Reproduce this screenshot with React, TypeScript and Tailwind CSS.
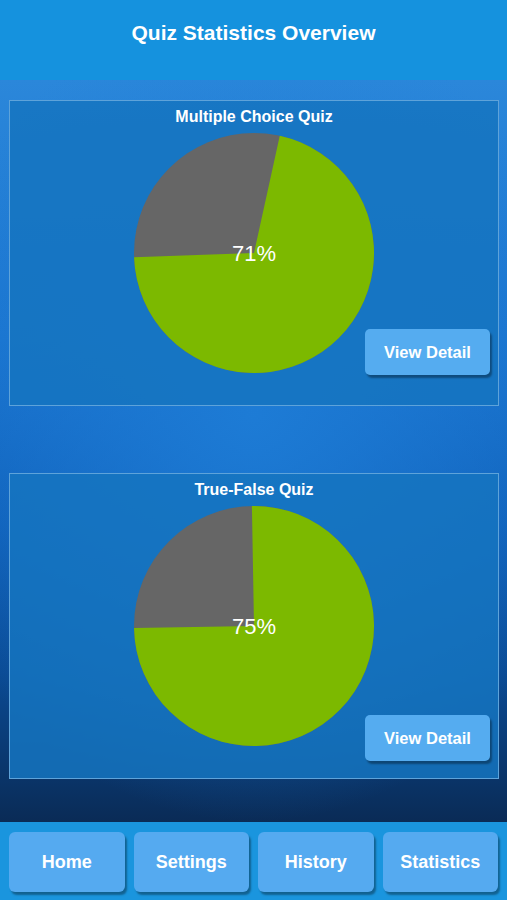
import React from "react";

const font = { fontFamily: '"Liberation Sans", Arial, sans-serif' };

function slicePath(cx: number, cy: number, r: number, a0: number, a1: number) {
  const pt = (a: number) => {
    const rad = ((a - 90) * Math.PI) / 180;
    return [cx + r * Math.cos(rad), cy + r * Math.sin(rad)];
  };
  const [x0, y0] = pt(a0);
  const [x1, y1] = pt(a1);
  const large = a1 - a0 > 180 ? 1 : 0;
  return `M${cx},${cy} L${x0},${y0} A${r},${r} 0 ${large} 1 ${x1},${y1} Z`;
}

function Pie({ percent, start }: { percent: number; start: number }) {
  const end = start + (percent / 100) * 360;
  return (
    <div className="relative h-[240px] w-[240px]">
      <svg width="240" height="240" viewBox="0 0 240 240">
        <circle cx="120" cy="120" r="120" fill="#666666" />
        <path d={slicePath(120, 120, 120, start, end)} fill="#7cb900" />
      </svg>
      <div className="absolute inset-0 flex items-center justify-center text-[22px] text-white">
        {percent}%
      </div>
    </div>
  );
}

function QuizCard({
  title,
  percent,
  start,
  buttonClass,
}: {
  title: string;
  percent: number;
  start: number;
  buttonClass: string;
}) {
  return (
    <div className="relative ml-[9px] mr-[8px] flex h-[306px] flex-col items-center border border-[#5ea3da] bg-[#1574c0]/85">
      <h2 className="mt-[6px] text-[16px] font-bold leading-[20px] text-white">{title}</h2>
      <div className="mt-[6px]">
        <Pie percent={percent} start={start} />
      </div>
      <button
        className={`absolute right-[8px] h-[46px] w-[125px] rounded-[5px] bg-[#55acf0] text-[16.5px] font-bold text-white shadow-[2px_3px_2px_rgba(0,0,0,0.35)] ${buttonClass}`}
      >
        View Detail
      </button>
    </div>
  );
}

export default function App() {
  const tabs = ["Home", "Settings", "History", "Statistics"];
  return (
    <div className="flex h-[900px] w-[507px] flex-col overflow-hidden" style={font}>
      <header className="flex h-[80px] items-start justify-center bg-[#1592de] pt-[20px]">
        <h1 className="text-[21px] font-bold leading-[26px] text-white">Quiz Statistics Overview</h1>
      </header>

      <main className="flex flex-1 flex-col gap-[67px] bg-[radial-gradient(ellipse_70%_55%_at_50%_45%,rgba(30,125,215,0.9)_0%,rgba(20,105,200,0)_100%),linear-gradient(to_bottom,#2b87da_0%,#1a74cf_35%,#0f5fb8_60%,#0a4a93_80%,#0a2b56_100%)] pt-[20px]">
        <QuizCard title="Multiple Choice Quiz" percent={71} start={12.4} buttonClass="bottom-[30px]" />
        <QuizCard title="True-False Quiz" percent={75} start={-1} buttonClass="bottom-[17px]" />
      </main>

      <nav className="grid h-[78px] grid-cols-4 gap-[9px] bg-[#1a95de] px-[9px] pb-[8px] pt-[10px]">
        {tabs.map((t) => (
          <button
            key={t}
            className="rounded-[6px] bg-[#55aaf0] text-[18px] font-bold text-white shadow-[2px_3px_2px_rgba(0,0,0,0.35)]"
          >
            {t}
          </button>
        ))}
      </nav>
    </div>
  );
}
